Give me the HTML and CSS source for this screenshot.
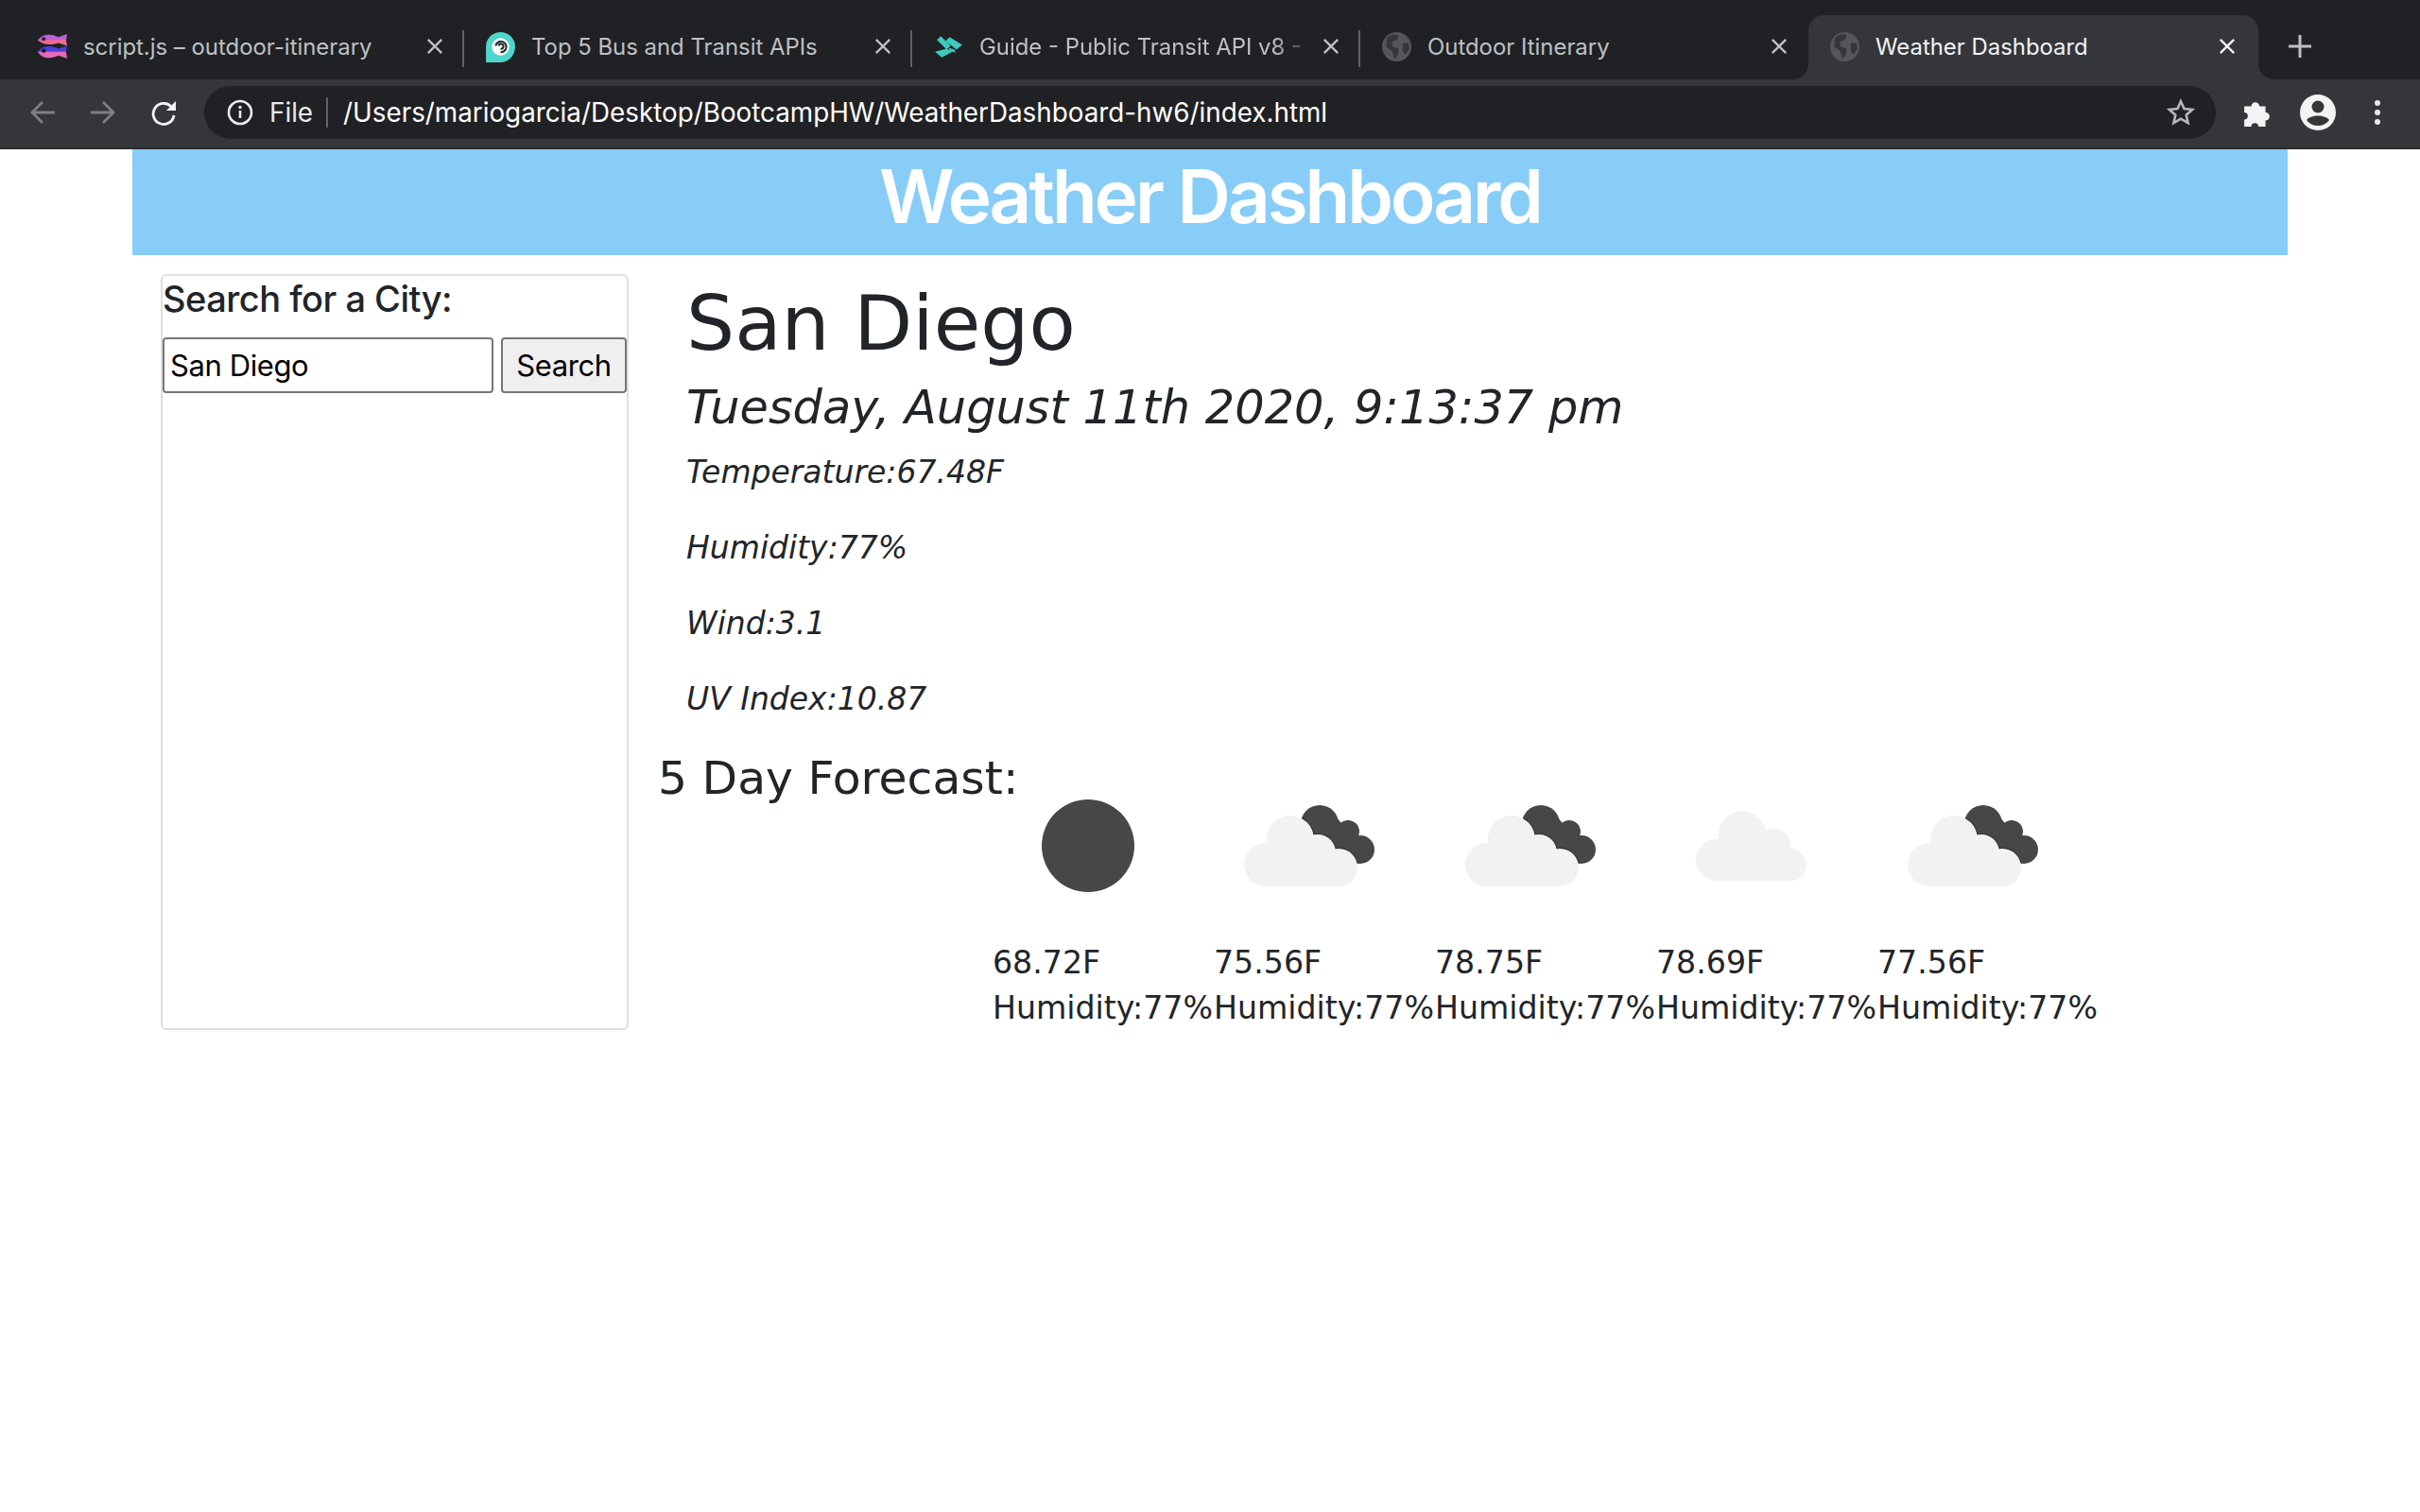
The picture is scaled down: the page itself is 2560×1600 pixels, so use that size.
FILE: index.html
```html
<!DOCTYPE html>
<html>
<head>
    <title>Weather Dashboard</title>
    <link rel="stylesheet" href="styles.css">
</head>
<body>
    <svg class="defs" width="0" height="0">
        <symbol id="globe" viewBox="0 0 32 32">
            <circle cx="16" cy="16" r="15" fill="#54565a"/>
            <path d="M6 7c4-4 9-4 12-3l-2 5-5 2 1 5 6 2-1 7-3 3-3-8-6-4z" fill="#35363a"/>
            <path d="M22 12l6 0 1 6-4 6-3-4z" fill="#35363a"/>
        </symbol>
        <symbol id="close" viewBox="0 0 20 20">
            <path d="M2 2l16 16M18 2L2 18" fill="none" stroke="currentColor" stroke-width="2.600"/>
        </symbol>
        <clipPath id="dark-part">
            <circle cx="112" cy="77" r="20"/>
            <circle cx="142" cy="85" r="12"/>
            <circle cx="155" cy="104" r="15"/>
            <path d="M98 70L130 70 150 95 155 119 140 115 105 100z"/>
        </clipPath>
        <symbol id="clouds" viewBox="0 0 200 200">
            <g fill="#474747">
                <circle cx="112" cy="77" r="20"/>
                <circle cx="142" cy="85" r="12"/>
                <circle cx="155" cy="104" r="15"/>
                <path d="M98 70L130 70 150 95 155 119 140 115 105 100z"/>
            </g>
            <g fill="#303030" clip-path="url(#dark-part)">
                <circle cx="81" cy="93" r="26"/>
                <circle cx="110" cy="107" r="20"/>
                <circle cx="132" cy="123" r="21"/>
            </g>
            <g fill="#f2f2f2">
                <circle cx="55" cy="120" r="23"/>
                <circle cx="81" cy="93" r="25"/>
                <circle cx="110" cy="107" r="19"/>
                <circle cx="132" cy="123" r="20"/>
                <rect x="55" y="108" width="77" height="35"/>
            </g>
        </symbol>
        <symbol id="cloud" viewBox="0 0 200 200">
            <g fill="#f2f2f2">
                <circle cx="64" cy="115" r="22"/>
                <circle cx="91" cy="88" r="25"/>
                <circle cx="124" cy="100" r="18"/>
                <circle cx="142" cy="120" r="17"/>
                <rect x="64" y="103" width="78" height="34"/>
            </g>
        </symbol>
    </svg>

    <div class="tabstrip">
        <div class="tab">
            <svg class="favicon" viewBox="0 0 32 32">
                <path d="M1 9C5 3 14 2 22 6l9-3-1 7H1z" fill="#c05fd8"/>
                <path d="M1 9h29l1 6-9-3c-8 3-17 2-21-3z" fill="#ee6a8e"/>
                <path d="M1 21c4-6 13-7 21-3l9-3-1 7H1z" fill="#4b3fd8"/>
                <path d="M1 21h29l1 7-9-3c-8 4-17 3-21-4z" fill="#e26ab8"/>
                <circle cx="7" cy="8" r="2" fill="#2b2140"/>
                <circle cx="7" cy="20" r="2" fill="#12123a"/>
            </svg>
            <span class="tab-title">script.js – outdoor-itinerary</span>
            <svg class="close"><use href="#close"/></svg>
        </div>
        <div class="tab">
            <svg class="favicon" viewBox="0 0 32 32">
                <path d="M1 16a15 15 0 0 1 30 0c0 9-7 16-15 16H1z" fill="#4fd5cc"/>
                <circle cx="16" cy="16" r="9" fill="#fff"/>
                <path d="M11 15a5.500 5.500 0 1 1 5 6.500M16 18a2.500 2.500 0 1 0-2-3" fill="none" stroke="#1f2f33" stroke-width="2"/>
            </svg>
            <span class="tab-title">Top 5 Bus and Transit APIs</span>
            <svg class="close"><use href="#close"/></svg>
        </div>
        <div class="tab">
            <svg class="favicon" viewBox="-2 -4 32 32">
                <path d="M2 5L6 1 16 11 12 15z" fill="#3ec9bd"/>
                <path d="M11 6L15 2 28 10 22 15 16 10 13 8z" fill="#3ec9bd"/>
                <path d="M14 13L20 15 21 18 15 16z" fill="#3ec9bd"/>
                <path d="M0 17L12 14 18 17 7 23z" fill="#3ec9bd"/>
            </svg>
            <span class="tab-title fade">Guide - Public Transit API v8 -</span>
            <svg class="close"><use href="#close"/></svg>
        </div>
        <div class="tab tab-last">
            <svg class="favicon"><use href="#globe"/></svg>
            <span class="tab-title">Outdoor Itinerary</span>
            <svg class="close"><use href="#close"/></svg>
        </div>
        <div class="tab active">
            <svg class="favicon"><use href="#globe"/></svg>
            <span class="tab-title">Weather Dashboard</span>
            <svg class="close"><use href="#close"/></svg>
        </div>
        <svg class="newtab" viewBox="0 0 24 24"><path d="M12 1v22M1 12h22" stroke="#bdc1c6" stroke-width="3" stroke-linecap="round"/></svg>
    </div>

    <div class="toolbar">
        <svg class="navicon" viewBox="0 0 28 28"><path d="M27 14H3M14 3L3 14l11 11" fill="none" stroke="#7d7f83" stroke-width="2.800"/></svg>
        <svg class="navicon" viewBox="0 0 28 28"><path d="M1 14h24M14 3l11 11-11 11" fill="none" stroke="#7d7f83" stroke-width="2.800"/></svg>
        <svg class="navicon" viewBox="0 0 28 28"><path d="M23 9a11 11 0 1 0 2 8" fill="none" stroke="#f1f3f4" stroke-width="2.800"/><path d="M27 2v10H17z" fill="#f1f3f4"/></svg>
        <div class="omnibox">
            <svg class="info" viewBox="0 0 28 28"><circle cx="14" cy="14" r="12" fill="none" stroke="#e8eaed" stroke-width="2.600"/><path d="M14 12v8" stroke="#e8eaed" stroke-width="2.600"/><circle cx="14" cy="8.500" r="1.700" fill="#e8eaed"/></svg>
            <span class="scheme">File</span>
            <span class="omni-sep"></span>
            <span class="url">/Users/mariogarcia/Desktop/BootcampHW/WeatherDashboard-hw6/index.html</span>
            <svg class="star" viewBox="0 0 28 28"><path d="M14 3l3.300 7.400 8 .8-6 5.300 1.800 7.900L14 20.300 6.900 24.400l1.800-7.900-6-5.300 8-.8z" fill="none" stroke="#b4b6b9" stroke-width="2.400"/></svg>
        </div>
        <svg class="puzzle" viewBox="0 0 28 28"><path d="M1 8h7a4 4 0 1 1 8 0h6v6a4 4 0 1 1 0 8v6h-7a3.500 3.500 0 1 0-7 0H1v-7a3.500 3.500 0 1 0 0-7z" fill="#f1f3f4"/></svg>
        <svg class="avatar" viewBox="0 0 38 38"><circle cx="19" cy="19" r="19" fill="#f1f3f4"/><circle cx="19" cy="13" r="6.500" fill="#35363a"/><path d="M7 27c4-6 20-6 24 0-3 4-7 6-12 6s-9-2-12-6z" fill="#35363a"/></svg>
        <svg class="dots" viewBox="0 0 8 28"><circle cx="4" cy="4" r="3" fill="#e8eaed"/><circle cx="4" cy="14" r="3" fill="#e8eaed"/><circle cx="4" cy="24" r="3" fill="#e8eaed"/></svg>
    </div>

    <div class="page">
        <header class="banner">Weather Dashboard</header>
        <div class="content">
            <aside class="search-card">
                <h4 class="search-title">Search for a City:</h4>
                <div class="search-row">
                    <input class="search-input" type="text" value="San Diego">
                    <button class="search-btn">Search</button>
                </div>
            </aside>
            <main class="current">
                <h1 class="city">San Diego</h1>
                <h3 class="date">Tuesday, August 11th 2020, 9:13:37 pm</h3>
                <p class="stat">Temperature:67.48F</p>
                <p class="stat">Humidity:77%</p>
                <p class="stat">Wind:3.1</p>
                <p class="stat">UV Index:10.87</p>
            </main>
        </div>
        <section class="forecast-wrap">
            <h3 class="forecast-title">5 Day Forecast:</h3>
            <div class="forecast">
                <div class="day">
                    <svg class="weather" viewBox="0 0 200 200"><circle cx="101" cy="100" r="49" fill="#474747"/></svg>
                    <div class="day-temp">68.72F</div>
                    <div>Humidity:77%</div>
                </div>
                <div class="day">
                    <svg class="weather"><use href="#clouds"/></svg>
                    <div class="day-temp">75.56F</div>
                    <div>Humidity:77%</div>
                </div>
                <div class="day">
                    <svg class="weather"><use href="#clouds"/></svg>
                    <div class="day-temp">78.75F</div>
                    <div>Humidity:77%</div>
                </div>
                <div class="day">
                    <svg class="weather"><use href="#cloud"/></svg>
                    <div class="day-temp">78.69F</div>
                    <div>Humidity:77%</div>
                </div>
                <div class="day">
                    <svg class="weather"><use href="#clouds"/></svg>
                    <div class="day-temp">77.56F</div>
                    <div>Humidity:77%</div>
                </div>
            </div>
        </section>
    </div>
</body>
</html>
```

FILE: styles.css
```css
body {
    margin: 0;
    background-color: #fff;
    color: #212529;
    font-family: "DejaVu Sans", sans-serif;
}
.defs {
    position: absolute;
}

/* tabs */
.tabstrip {
    display: flex;
    align-items: stretch;
    height: 68px;
    padding: 16px 0 0 17px;
    background-color: #202124;
    font-family: Inter, sans-serif;
}
.tab {
    display: flex;
    align-items: center;
    box-sizing: border-box;
    width: 474px;
    padding: 0 22px 2px 22px;
    color: #bdc1c6;
    font-size: 23.900px;
    position: relative;
}
.tab::after {
    content: "";
    position: absolute;
    right: 0;
    top: 16px;
    height: 39px;
    width: 2px;
    background-color: #5f6368;
}
.tab-last::after {
    display: none;
}
.active {
    width: 476px;
    padding-right: 24px;
    background-color: #35363a;
    border-radius: 16px 16px 0 0;
    color: #f1f3f4;
}
.active::before,
.active::after {
    content: "";
    display: block;
    position: absolute;
    top: auto;
    bottom: 0;
    width: 16px;
    height: 16px;
}
.active::before {
    left: -16px;
    background: radial-gradient(circle at 0 0, #202124 15.500px, #35363a 16px);
}
.active::after {
    right: -16px;
    background: radial-gradient(circle at 100% 0, #202124 15.500px, #35363a 16px);
}
.favicon {
    width: 33px;
    height: 33px;
    flex: none;
}
.tab-title {
    flex: 1;
    margin-left: 16px;
    overflow: hidden;
    white-space: nowrap;
}
.fade {
    -webkit-mask-image: linear-gradient(to right, #000 88%, transparent 100%);
    mask-image: linear-gradient(to right, #000 88%, transparent 100%);
}
.close {
    width: 18px;
    height: 18px;
    margin-left: 10px;
    flex: none;
    color: #bdc1c6;
}
.active .close {
    color: #f1f3f4;
}
.newtab {
    width: 24px;
    height: 24px;
    margin: 21px 0 0 32px;
}

/* toolbar */
.toolbar {
    display: flex;
    align-items: center;
    box-sizing: border-box;
    height: 74px;
    padding: 0 0 2px 31px;
    background-color: #35363a;
    border-bottom: 2px solid #2b2c2f;
    font-family: Inter, sans-serif;
}
.navicon {
    width: 28px;
    height: 28px;
    margin-right: 36px;
}
.omnibox {
    display: flex;
    align-items: center;
    box-sizing: border-box;
    width: 2128px;
    height: 56px;
    margin-left: -7px;
    padding: 0 22px 0 24px;
    border-radius: 28px;
    background-color: #202124;
    color: #fff;
    font-size: 27.800px;
}
.info {
    width: 28px;
    height: 28px;
    margin-right: 17px;
}
.scheme {
    color: #e8eaed;
}
.omni-sep {
    width: 2px;
    height: 32px;
    margin: 0 16px 0 14px;
    background-color: #5f6368;
}
.url {
    flex: 1;
    white-space: nowrap;
}
.star {
    width: 30px;
    height: 30px;
}
.puzzle {
    width: 30px;
    height: 30px;
    margin-left: 29px;
}
.avatar {
    width: 38px;
    height: 38px;
    margin-left: 30px;
}
.dots {
    width: 8px;
    height: 28px;
    margin-left: 40px;
}

/* page */
.page {
    margin: 0 140px;
}
.banner {
    height: 112px;
    background-color: #88cdf7;
    color: #fff;
    font-family: Inter, sans-serif;
    font-size: 78px;
    font-weight: 600;
    letter-spacing: -3px;
    line-height: 100px;
    text-align: center;
}
.content {
    display: flex;
    margin-top: 20px;
    padding-left: 30px;
}
.search-card {
    box-sizing: border-box;
    width: 495px;
    height: 800px;
    border: 2px solid #dfdfdf;
    border-radius: 6px;
    font-family: Inter, sans-serif;
}
.search-title {
    margin: 0;
    font-size: 38px;
    font-weight: 500;
    letter-spacing: -0.500px;
    line-height: 49px;
}
.search-row {
    display: flex;
    gap: 8px;
    margin-top: 16px;
}
.search-input {
    box-sizing: border-box;
    width: 350px;
    height: 59px;
    padding: 0 6px;
    border: 2px solid #767676;
    border-radius: 4px;
    color: #000;
    font-family: Inter, sans-serif;
    font-size: 31px;
    letter-spacing: -0.400px;
}
.search-btn {
    box-sizing: border-box;
    width: 133px;
    height: 59px;
    padding: 0;
    border: 2px solid #767676;
    border-radius: 4px;
    background-color: #efefef;
    color: #000;
    font-family: Inter, sans-serif;
    font-size: 31px;
    letter-spacing: -0.400px;
}
.current {
    margin-left: 61px;
    padding-top: 4px;
}
.city {
    margin: 0;
    font-size: 80.600px;
    font-weight: 400;
    line-height: 96px;
}
.date {
    margin: 12px 0 16px;
    font-size: 49.400px;
    font-style: italic;
    font-weight: 400;
    line-height: 58px;
}
.stat {
    margin: 0 0 32px;
    font-size: 33px;
    font-style: italic;
    line-height: 48px;
}

/* the title sits left of the cards and its height pushes nothing */
.forecast-wrap {
    display: flex;
    margin-top: -295px;
    margin-left: 556px;
    font-size: 33.200px;
}
.forecast-title {
    margin: 0;
    width: 354px;
    flex: none;
    font-size: 48.800px;
    font-weight: 400;
    line-height: 58px;
    white-space: nowrap;
}
.forecast {
    display: flex;
    padding-top: 0;
    line-height: 48px;
}
.day {
    width: 234px;
    white-space: nowrap;
}
.weather {
    display: block;
    width: 200px;
    height: 200px;
}
.day-temp {
    margin-top: 0;
}
```
